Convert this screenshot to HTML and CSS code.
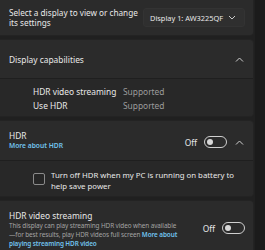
FILE: index.html
```html
<!DOCTYPE html>
<html>
<head>
<meta charset="utf-8">
<link rel="stylesheet" href="styles.css">
</head>
<body>
<div class="page">
  <div class="main">
    <div class="card top">
      <div class="label">Select a display to view or change its settings</div>
      <div class="dropdown">
        <span>Display 1: AW3225QF</span>
        <svg class="chev" width="8" height="5" viewBox="0 0 8 5"><path d="M1 1l3 3 3-3" fill="none" stroke="#c8c8c8" stroke-width="1"/></svg>
      </div>
    </div>

    <div class="card exp">
      <div class="head caps">
        <div class="title">Display capabilities</div>
        <svg class="up" width="9" height="5" viewBox="0 0 9 5"><path d="M1 4.5l3.5-3.5 3.5 3.5" fill="none" stroke="#d0d0d0" stroke-width="1"/></svg>
      </div>
      <div class="body capbody">
        <div class="caprow"><span class="k">HDR video streaming</span><span class="v">Supported</span></div>
        <div class="caprow"><span class="k">Use HDR</span><span class="v">Supported</span></div>
      </div>
    </div>

    <div class="card exp">
      <div class="head hdr">
        <div class="txt">
          <div class="title">HDR</div>
          <div class="link">More about HDR</div>
        </div>
        <div class="ctl">
          <span class="off">Off</span>
          <span class="toggle"><span class="knob"></span></span>
          <svg class="up" width="9" height="5" viewBox="0 0 9 5"><path d="M1 4.5l3.5-3.5 3.5 3.5" fill="none" stroke="#d0d0d0" stroke-width="1"/></svg>
        </div>
      </div>
      <div class="body chkbody">
        <span class="box"></span>
        <span class="chktext">Turn off HDR when my PC is running on battery to help save power</span>
      </div>
    </div>

    <div class="card stream">
      <div class="txt">
        <div class="title">HDR video streaming</div>
        <div class="desc">This display can play streaming HDR video when available<br>—for best results, play HDR videos full screen <span class="link">More about playing streaming HDR video</span></div>
      </div>
      <div class="ctl2">
        <span class="off">Off</span>
        <span class="toggle"><span class="knob"></span></span>
      </div>
    </div>
  </div>
  <div class="strip"></div>
</div>
</body>
</html>
```

FILE: styles.css
```css
html, body {
  margin: 0;
  padding: 0;
  background: #202020;
  width: 265px;
  height: 250px;
  overflow: hidden;
}
body {
  font-family: "Noto Sans", "Open Sans", sans-serif;
  font-size: 8.4px;
  color: #e8e8e8;
}
.page {
  display: flex;
  height: 250px;
}
.main {
  width: 259px;
  margin-left: -5px;
  display: flex;
  flex-direction: column;
  gap: 3px;
}
.strip {
  width: 10px;
  margin-left: 1px;
  background: #1b1b1b;
}
.card {
  background: #2b2b2b;
  border: 1px solid #232323;
  border-radius: 4px;
  box-sizing: border-box;
}
.top {
  height: 36px;
  border-top: none;
  border-radius: 0 0 4px 4px;
  display: flex;
  align-items: center;
  padding: 0 9px 0 13px;
}
.label {
  flex: none;
  width: 134px;
  font-size: 8.2px;
  line-height: 10px;
}
.dropdown {
  flex: none;
  margin-left: auto;
  width: 102px;
  height: 19px;
  background: #2f2f2f;
  border: 1px solid #333333;
  border-radius: 3px;
  box-sizing: border-box;
  display: flex;
  align-items: center;
  justify-content: space-between;
  padding: 0 8px 0 6px;
}
.dropdown span { white-space: nowrap; font-size: 7.4px; }
.head {
  display: flex;
  align-items: center;
  justify-content: space-between;
  padding: 0 9px 0 13px;
  border-bottom: 1px solid #1f1f1f;
}
.caps { height: 38px; }
.hdr { height: 39px; }
.title { line-height: 11px; }
.link {
  color: #72c3ee;
  font-size: 6.7px;
  font-weight: 600;
  line-height: 10px;
}
.body { background: #282828; border-radius: 0 0 4px 4px; }
.capbody {
  height: 37px;
  padding: 6px 0 0 37px;
  box-sizing: border-box;
}
.caprow {
  display: flex;
  line-height: 14px;
  white-space: nowrap;
}
.k { width: 90px; }
.v { color: #9c9c9c; }
.ctl {
  display: flex;
  align-items: center;
  margin-top: 3px;
}
.off { margin-right: 7px; }
.toggle {
  width: 23px;
  height: 12px;
  border: 1px solid #cfcfcf;
  border-radius: 7px;
  box-sizing: border-box;
  position: relative;
  display: inline-block;
}
.knob {
  position: absolute;
  left: 2px;
  top: 2px;
  width: 6px;
  height: 6px;
  border-radius: 50%;
  background: #d8d8d8;
}
.ctl .up { margin-left: 8px; }
.chkbody {
  height: 35px;
  box-sizing: border-box;
  display: flex;
  align-items: flex-start;
  padding: 9px 0 0 37px;
}
.box {
  width: 10px;
  height: 10px;
  border: 1px solid #8a8a8a;
  border-radius: 2px;
  flex: none;
  margin-top: 3px;
  margin-right: 6px;
  background: #262626;
}
.chktext {
  width: 186px;
  font-size: 7.8px;
  line-height: 11px;
}
.stream {
  flex: 1;
  border-bottom: none;
  border-radius: 4px 4px 0 0;
  display: flex;
  align-items: flex-start;
  padding: 9px 8px 0 13px;
}
.stream .txt { width: 190px; flex: none; }
.desc {
  color: #a3a3a3;
  font-size: 6.4px;
  line-height: 9px;
  letter-spacing: -0.1px;
}
.desc .link { font-size: 6.4px; line-height: 9px; }
.ctl2 {
  display: flex;
  align-items: center;
  margin-left: auto;
  margin-top: 12px;
}
.ctl2 .off { margin-right: 7px; }
```
